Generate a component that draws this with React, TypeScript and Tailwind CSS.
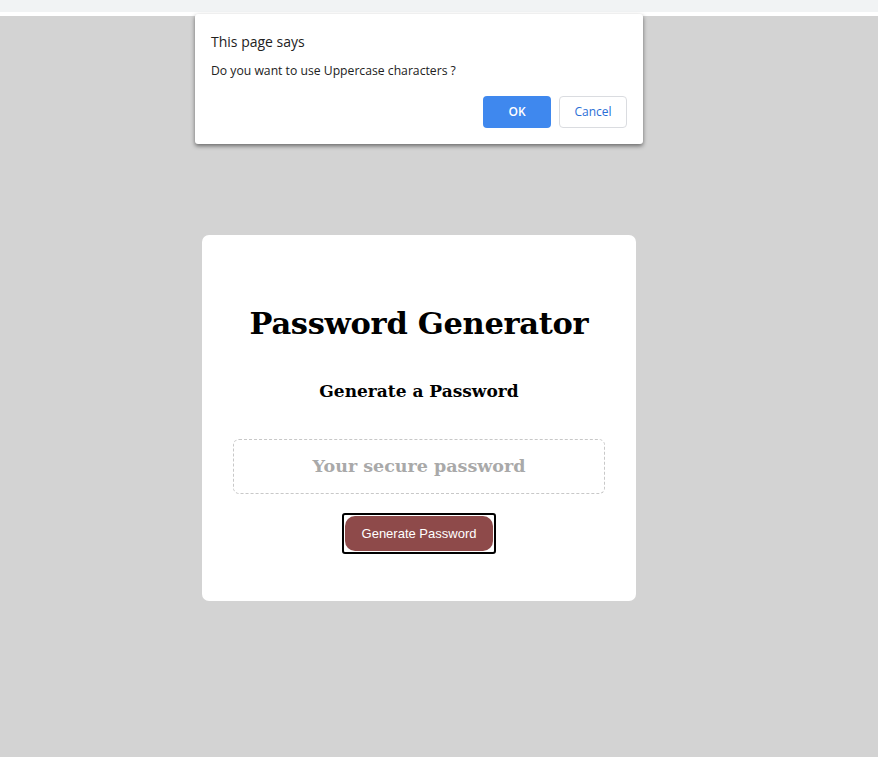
export default function App() {
  return (
    <div className="relative min-h-[757px] w-[878px] bg-[#d3d3d3]">
      {/* browser chrome strip */}
      <div className="h-[12px] bg-[#f1f3f4]" />
      <div className="h-[4px] bg-white" />

      {/* page */}
      <div className="w-[838px] flex justify-center pt-[219px]">
        <div
          className="w-[434px] h-[366px] bg-white rounded-[7px] flex flex-col items-center pt-[66px]"
          style={{ fontFamily: '"DejaVu Serif", Georgia, serif' }}
        >
          <h1 className="text-[30.5px] leading-[44px] font-bold text-black tracking-[-0.3px]">
            Password Generator
          </h1>
          <h2 className="mt-[34px] text-[17px] leading-[24px] font-bold text-black">
            Generate a Password
          </h2>
          <div className="mt-[36px] w-[372px] h-[55px] rounded-[6px] border border-dashed border-[#c8c8c8] flex items-center justify-center">
            <span className="text-[17.5px] font-bold text-[#a9a9a9]">Your secure password</span>
          </div>
          <div className="mt-[19px] rounded-[3px] border-2 border-black p-px">
            <button
              className="h-[35px] w-[148px] rounded-[10px] bg-[#8e4a4a] text-white text-[13px]"
              style={{ fontFamily: '"Liberation Sans", Arial, sans-serif' }}
            >
              Generate Password
            </button>
          </div>
        </div>
      </div>

      {/* alert dialog */}
      <div
        className="absolute left-[195px] top-[14px] w-[448px] h-[130px] bg-white rounded-[3px] shadow-[0_2px_4px_rgba(0,0,0,0.5)] px-4 pt-[19px]"
        style={{ fontFamily: '"Open Sans", "Noto Sans", sans-serif' }}
      >
        <div className="text-[14px] leading-[18px] text-[#222]">This page says</div>
        <div className="mt-[12px] text-[12.2px] leading-[16px] text-[#222]">
          Do you want to use Uppercase characters ?
        </div>
        <div className="mt-[17px] flex justify-end gap-2">
          <button className="w-[68px] h-[32px] rounded-[4px] bg-[#3f88ee] text-white text-[12px] font-semibold">
            OK
          </button>
          <button className="w-[68px] h-[32px] rounded-[4px] border border-[#dadce0] bg-white text-[#2a6fd6] text-[12px] font-medium">
            Cancel
          </button>
        </div>
      </div>
    </div>
  );
}
